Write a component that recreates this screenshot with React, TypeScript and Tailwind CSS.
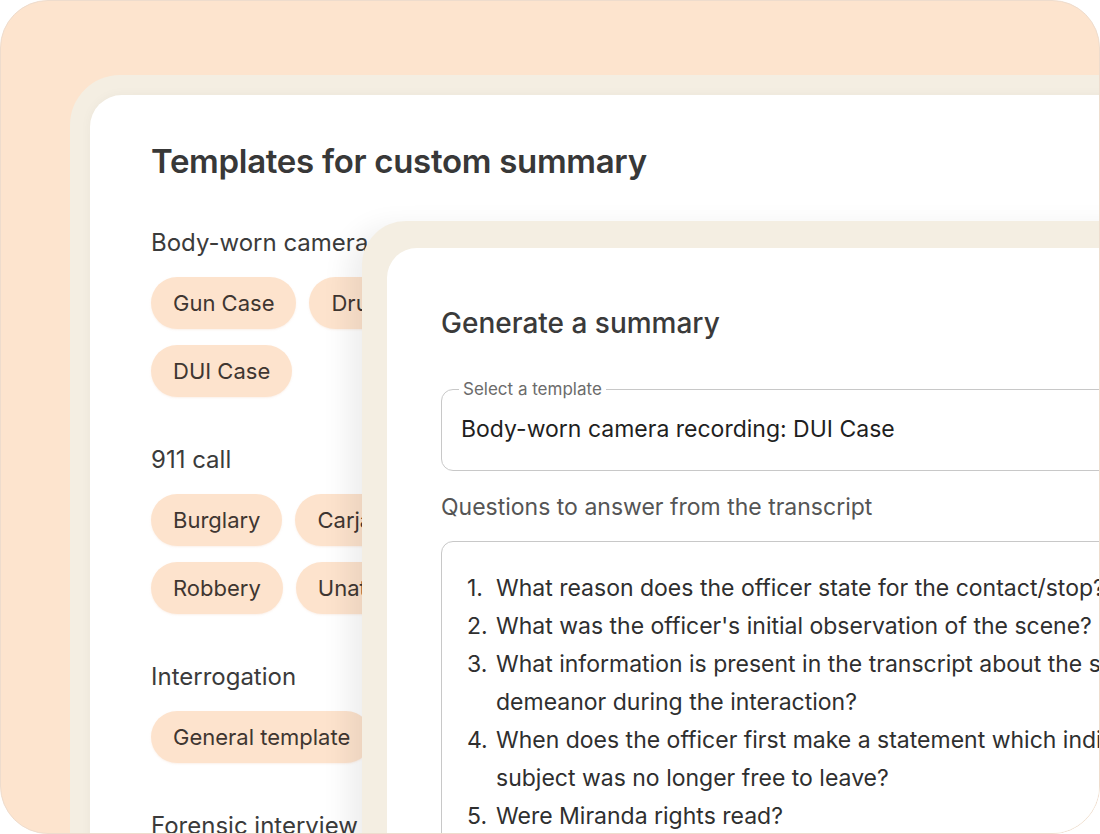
import React from "react";

const inter = { fontFamily: "Inter, 'Noto Sans', sans-serif" };

type Section = { label: string; rows: string[][] };

const sections: Section[] = [
  { label: "Body-worn camera recording", rows: [["Gun Case", "Drug Case"], ["DUI Case"]] },
  { label: "911 call", rows: [["Burglary", "Carjacking"], ["Robbery", "Unattended death"]] },
  { label: "Interrogation", rows: [["General template"]] },
  { label: "Forensic interview", rows: [["Child abuse"]] },
];

function Chip({ children }: { children: React.ReactNode }) {
  return (
    <div className="h-[52px] px-[22px] rounded-full bg-[#fde3cd] text-[#3f3631] text-[22px] leading-[52px] whitespace-nowrap shadow-[0_1px_2px_rgba(240,200,170,0.25)]">
      {children}
    </div>
  );
}

function TemplatesCard() {
  return (
    <div className="ml-[69px] mt-[74px] w-[1200px] h-[900px] rounded-tl-[50px] bg-[#f4eee2] pl-[20px] pt-[20px]">
      <div className="h-full rounded-tl-[32px] bg-white pl-[61px] pt-[46px] shadow-[0_0_12px_rgba(0,0,0,0.04)]">
        <h1 className="text-[33px] leading-[40px] font-semibold text-[#383838] tracking-[-0.3px]">
          Templates for custom summary
        </h1>
        <div className="mt-[46px] flex flex-col gap-[47px]">
          {sections.map((s) => (
            <div key={s.label}>
              <div className="text-[24px] leading-[32px] text-[#3b3b3b]">{s.label}</div>
              <div className="mt-[18px] flex flex-col gap-[16px]">
                {s.rows.map((row, i) => (
                  <div key={i} className="flex gap-[13px]">
                    {row.map((c) => (
                      <Chip key={c}>{c}</Chip>
                    ))}
                  </div>
                ))}
              </div>
            </div>
          ))}
        </div>
      </div>
    </div>
  );
}

const questions: React.ReactNode[] = [
  "What reason does the officer state for the contact/stop?",
  "What was the officer's initial observation of the scene?",
  <>
    What information is present in the transcript about the subject's
    <br />
    demeanor during the interaction?
  </>,
  <>
    When does the officer first make a statement which indicates the
    <br />
    subject was no longer free to leave?
  </>,
  "Were Miranda rights read?",
  "Did the subject make any admissions?",
];

function SummaryCard() {
  return (
    <div className="absolute left-[361px] top-[220px] w-[900px] h-[700px] rounded-tl-[44px] bg-[#f4eee2] pl-[25px] pt-[27px] shadow-[-14px_6px_28px_rgba(0,0,0,0.07)]">
      <div className="h-full rounded-tl-[30px] bg-white pl-[54px] pt-[57px]">
        <h2 className="text-[28px] leading-[36px] font-medium text-[#3a3a3a]">Generate a summary</h2>
        <fieldset className="mt-[38px] w-[800px] rounded-[12px] border border-[#c8c8c8] pl-[17px] pt-[15px] pb-[26px]">
          <legend className="px-[4px] text-[17px] leading-[20px] text-[#6b6b6b]">Select a template</legend>
          <div className="pl-[2px] text-[23px] leading-[30px] text-[#1f1f1f]">
            Body-worn camera recording: DUI Case
          </div>
        </fieldset>
        <div className="mt-[21px] text-[23px] leading-[30px] text-[#555555]">
          Questions to answer from the transcript
        </div>
        <div className="mt-[19px] w-[800px] h-[400px] rounded-[12px] border border-[#c8c8c8] pl-[25px] pt-[27px]">
          <ol className="text-[23px] leading-[38px] text-[#2f2f2f]">
            {questions.map((q, i) => (
              <li key={i} className="flex">
                <span className="w-[29px] shrink-0">{i + 1}.</span>
                <span className="whitespace-nowrap">{q}</span>
              </li>
            ))}
          </ol>
        </div>
      </div>
    </div>
  );
}

export default function App() {
  return (
    <div className="w-[1100px] h-[834px] bg-white" style={inter}>
      <div className="relative w-[1100px] h-[834px] overflow-hidden rounded-[48px] border-[1.5px] border-[#eedccd] bg-[#fde4ce]">
        <TemplatesCard />
        <SummaryCard />
      </div>
    </div>
  );
}
